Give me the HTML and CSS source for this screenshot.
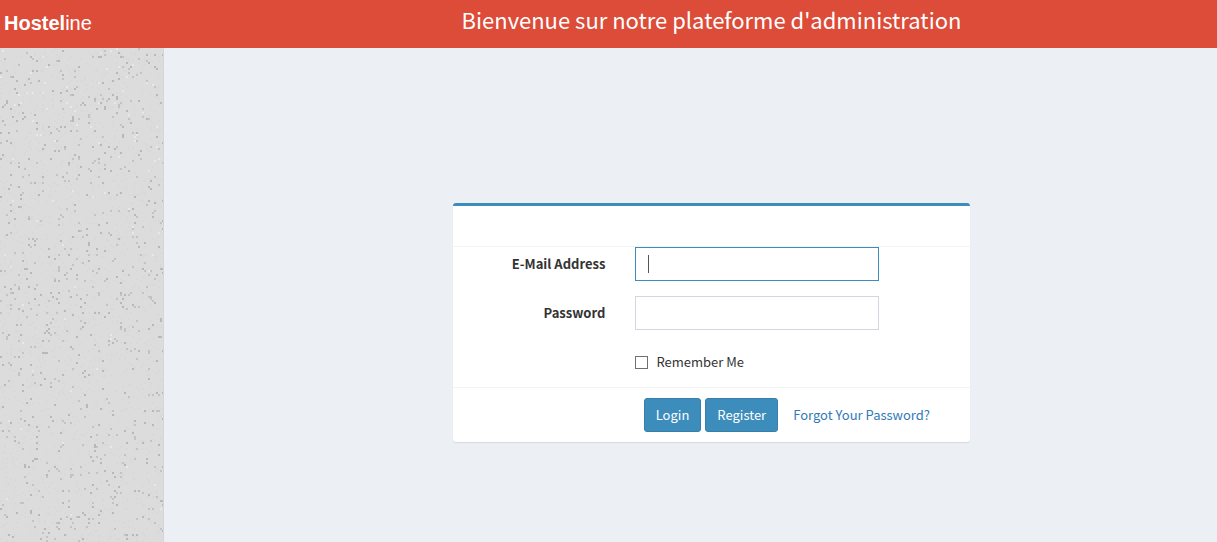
FILE: index.html
```html
<!DOCTYPE html>
<html lang="fr">
<head>
<meta charset="utf-8">
<meta name="viewport" content="width=device-width, initial-scale=1">
<title>Hosteline</title>
<link rel="stylesheet" href="styles.css">
</head>
<body>
<header class="topbar">
  <a class="logo" href="#"><b>Hostel</b>ine</a>
  <h1 class="title">Bienvenue sur notre plateforme d'administration</h1>
</header>
<div class="layout">
  <aside class="sidebar"><canvas class="texture" width="82" height="247"></canvas></aside>
  <main class="content">
    <form class="box">
      <div class="box-header"></div>
      <div class="box-body">
        <div class="form-group">
          <label class="form-label" for="email">E-Mail Address</label>
          <div class="field">
            <input class="form-control" id="email" type="email" autofocus>
            <span class="caret" aria-hidden="true"></span>
          </div>
        </div>
        <div class="form-group">
          <label class="form-label" for="password">Password</label>
          <div class="field"><input class="form-control" id="password" type="password"></div>
        </div>
        <div class="form-group remember-row">
          <label class="remember"><input class="check" type="checkbox">Remember Me</label>
        </div>
      </div>
      <div class="box-footer">
        <div class="actions">
          <button class="btn" type="submit">Login</button>
          <button class="btn" type="button">Register</button>
          <a class="forgot" href="#">Forgot Your Password?</a>
        </div>
      </div>
    </form>
  </main>
</div>
<script src="texture.js"></script>
</body>
</html>
```
FILE: styles.css
```css
* { box-sizing: border-box; }
body {
  margin: 0;
  min-height: 100vh;
  display: flex;
  flex-direction: column;
  background: #ecf0f5;
  color: #333;
  font-family: "Noto Sans CJK SC", "Open Sans", sans-serif;
  font-size: 13px;
  line-height: 20px;
}
.topbar {
  display: flex;
  height: 48px;
  background: #dd4b39;
  color: #fff;
}
.logo {
  flex: 0 0 164px;
  padding-left: 4px;
  color: #fff;
  font-family: "Liberation Sans", Arial, sans-serif;
  font-size: 20px;
  line-height: 46px;
  text-decoration: none;
}
.title {
  flex: 1;
  margin: 0;
  padding-left: 42px;
  text-align: center;
  font-size: 22px;
  font-weight: 400;
  line-height: 38px;
}
.layout { flex: 1; display: flex; }
.sidebar {
  position: relative;
  flex: 0 0 164px;
  overflow: hidden;
  background: #dcdcdc;
  border-right: 1px solid #d2d6de;
}
.texture {
  position: absolute;
  top: 0;
  left: 0;
  width: 164px;
  image-rendering: pixelated;
}
.content {
  flex: 1;
  padding: 155px 0 0 42px;
}
.box {
  width: 51.1%;
  margin: 0 auto;
  background: #fff;
  border-top: 3px solid #3c8dbc;
  border-radius: 3px;
  box-shadow: 0 1px 1px rgba(0, 0, 0, 0.1);
}
.box-header { height: 41px; border-bottom: 1px solid #f4f4f4; }
.form-group { display: flex; margin: 0 -15px 15px; }
.form-label {
  width: 33.3333%;
  padding: 7px 15px 0;
  font-weight: 700;
  text-align: right;
}
.field {
  position: relative;
  width: 50%;
  padding: 0 15px;
}
.form-control {
  display: block;
  width: 100%;
  height: 34px;
  padding: 6px 12px;
  border: 1px solid #d2d6de;
  border-radius: 0;
  background: #fff;
  color: #555;
  font: inherit;
  caret-color: transparent;
}
.form-control:focus { border-color: #3c8dbc; outline: none; }
.caret {
  position: absolute;
  top: 8px;
  left: 28px;
  width: 1px;
  height: 18px;
  background: #555;
  visibility: hidden;
}
.form-control:focus + .caret { visibility: visible; }
.remember-row { padding-top: 7px; }
.remember {
  display: flex;
  align-items: center;
  gap: 8px;
  margin-left: 33.3333%;
  padding-left: 15px;
}
.check {
  appearance: none;
  width: 13px;
  height: 13px;
  margin: 0;
  border: 1px solid #707070;
  background: #fff;
}
.check:checked { background: #3c8dbc; }
.box-footer {
  padding: 10px;
  border-top: 1px solid #f4f4f4;
}
.actions {
  display: flex;
  gap: 4px;
  padding-left: 33.3333%;
  margin-left: 15px;
  white-space: nowrap;
}
.btn {
  height: 34px;
  padding: 0 11px;
  border: 1px solid #367fa9;
  border-radius: 3px;
  background: #3c8dbc;
  color: #fff;
  font: inherit;
}
.forgot {
  padding: 7px 11px;
  color: #337ab7;
  text-decoration: none;
}
```
FILE: texture.js
```js
// Speckled sidebar background: one canvas pixel per 2px cell.
const canvas = document.querySelector('.texture');
const ctx = canvas.getContext('2d');
let seed = 7391;
function rand() {
  seed = (seed * 1664525 + 1013904223) % 4294967296;
  return seed / 4294967296;
}
for (let y = 0; y < canvas.height; y++) {
  for (let x = 0; x < canvas.width; x++) {
    const r = rand();
    const light = y < 100 ? 0.008 : 0.002;
    let shade = null;
    if (r < 0.02) shade = '#b8b8b8';
    else if (r < 0.038) shade = '#c3c3c3';
    else if (r < 0.038 + light) shade = '#e8e8e8';
    else if (r < 0.14) shade = '#d9d9d9';
    if (shade) {
      ctx.fillStyle = shade;
      ctx.fillRect(x, y, 1, 1);
    }
  }
}
```
